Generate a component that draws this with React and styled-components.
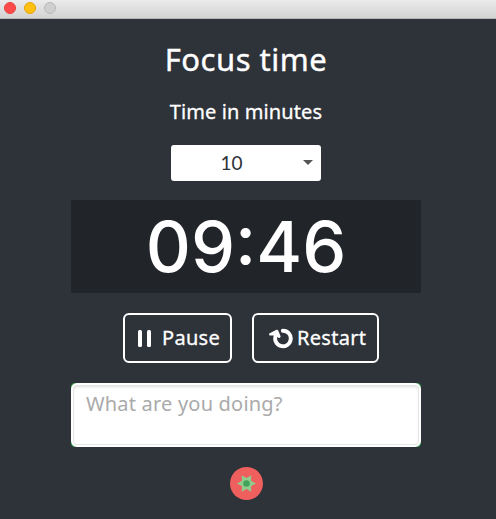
import React from "react";
import styled, { createGlobalStyle } from "styled-components";

const GlobalStyle = createGlobalStyle`
  * { box-sizing: border-box; }
  body {
    margin: 0;
    background: #2e3239;
    color: #fff;
    font-family: "Noto Sans", "Open Sans", sans-serif;
  }
  button, select, textarea { font-family: inherit; }
`;

const Window = styled.div`
  width: 496px;
  height: 519px;
  overflow: hidden;
  background: #2e3239;
`;

const TitleBar = styled.header`
  display: flex;
  align-items: flex-start;
  gap: 8px;
  height: 19px;
  padding: 2px 4px 0;
  background: linear-gradient(#ebebeb, #d3d3d3);
  border-bottom: 1px solid #b4b4b4;
`;

const Light = styled.span`
  width: 12px;
  height: 12px;
  border-radius: 50%;
  background: ${(p) => p.$fill};
  border: 1px solid ${(p) => p.$edge};
`;

const Content = styled.main`
  display: flex;
  flex-direction: column;
  align-items: center;
  width: 350px;
  margin: 0 79px 0 71px;
`;

const Title = styled.h1`
  margin: 20px 0 0;
  font-size: 31px;
  line-height: 40px;
  font-weight: 400;
  letter-spacing: 0.5px;
  -webkit-text-stroke: 0.4px #fff;
`;

const Label = styled.label`
  margin-top: 20px;
  font-size: 20px;
  line-height: 26px;
  font-weight: 400;
  letter-spacing: 0.1px;
  -webkit-text-stroke: 0.3px #fff;
`;

const Picker = styled.div`
  display: flex;
  align-items: center;
  width: 150px;
  height: 36px;
  margin-top: 20px;
  padding-right: 8px;
  border-radius: 3px;
  background: #fff;
  color: #2e3239;
`;

const PickerValue = styled.span`
  flex: 1;
  padding-right: 11px;
  text-align: center;
  font: 400 19px/34px Lato, sans-serif;
`;

const Caret = styled.span`
  margin-bottom: 2px;
  border: 5px solid transparent;
  border-top-color: #555;
  border-bottom: 0;
`;

const Clock = styled.div`
  width: 350px;
  height: 93px;
  margin-top: 19px;
  background: #212429;
  text-align: center;
  font-family: Inter, sans-serif;
  font-size: 70px;
  line-height: 93px;
  font-weight: 500;
`;

const Buttons = styled.div`
  display: flex;
  gap: 20px;
  margin: 20px 0 0 10px;
  align-self: center;
`;

const Button = styled.button`
  display: flex;
  align-items: center;
  width: ${(p) => p.$width}px;
  height: 50px;
  padding: 0 0 0 ${(p) => p.$inset}px;
  gap: ${(p) => p.$gap}px;
  border: 2px solid #fff;
  border-radius: 6px;
  background: transparent;
  color: #fff;
  font-size: 20px;
  line-height: 26px;
  font-weight: 400;
  letter-spacing: 0.3px;
  -webkit-text-stroke: 0.3px #fff;
  svg { flex: none; }
`;

const TaskFrame = styled.div`
  width: 350px;
  height: 64px;
  margin-top: 20px;
  border-radius: 4px;
  background: #2f9a4c;
`;

const Task = styled.textarea`
  display: block;
  width: 100%;
  height: 100%;
  padding: 6px 13px;
  border: 2px solid #fff;
  border-radius: 6px;
  resize: none;
  outline: none;
  background: #fff;
  box-shadow: inset 0 0 0 1px #e6e6e6, inset 0 2px 3px #dedede;
  font-size: 20px;
  line-height: 26px;
  letter-spacing: 0.2px;
  &::placeholder { color: #aaa; opacity: 1; }
`;

const Badge = styled.svg`
  display: block;
  width: 33px;
  height: 33px;
  margin-top: 20px;
`;

export default function App() {
  return (
    <Window>
      <GlobalStyle />
      <TitleBar>
        <Light $fill="#ff4b4b" $edge="#e8403f" />
        <Light $fill="#ffc012" $edge="#e5a50c" />
        <Light $fill="#cfcfcf" $edge="#b9b9b9" />
      </TitleBar>
      <Content>
        <Title>Focus time</Title>
        <Label>Time in minutes</Label>
        <Picker>
          <PickerValue>10</PickerValue>
          <Caret />
        </Picker>
        <Clock>09:46</Clock>
        <Buttons>
          <Button $width={109} $inset={13} $gap={11}>
            <svg width="13" height="18" viewBox="0 0 13 18" fill="#fff">
              <rect x="0" y="1" width="4" height="17" rx="1.5" />
              <rect x="9" y="1" width="4" height="17" rx="1.5" />
            </svg>
            Pause
          </Button>
          <Button $width={127} $inset={14} $gap={4}>
            <svg width="25" height="22" viewBox="0 0 25 22" fill="none" stroke="#fff">
              <path d="M14.8 3.7A7.8 7.8 0 1 1 8 8" strokeWidth="3.9" strokeLinecap="round" />
              <path
                d="M2.3 7.3L9 4L11.3 9.6L7.6 7.2Z"
                fill="#fff"
                strokeWidth="2.6"
                strokeLinecap="round"
                strokeLinejoin="round"
              />
            </svg>
            Restart
          </Button>
        </Buttons>
        <TaskFrame>
          <Task placeholder="What are you doing?" />
        </TaskFrame>
        <Badge viewBox="0 0 33 33">
          <circle cx="16.5" cy="16.5" r="16.5" fill="#ee5f5e" />
          <path
            fill="#91cc8f"
            d="M7 16.5L12 13.8L11.7 8.3L16.5 11L21.3 8.3L21 13.8L26 16.5L21 19.2L21.3 24.7L16.5 22L11.7 24.7L12 19.2Z"
          />
          <circle cx="16.5" cy="16.5" r="3.3" fill="#43a35b" />
        </Badge>
      </Content>
    </Window>
  );
}
